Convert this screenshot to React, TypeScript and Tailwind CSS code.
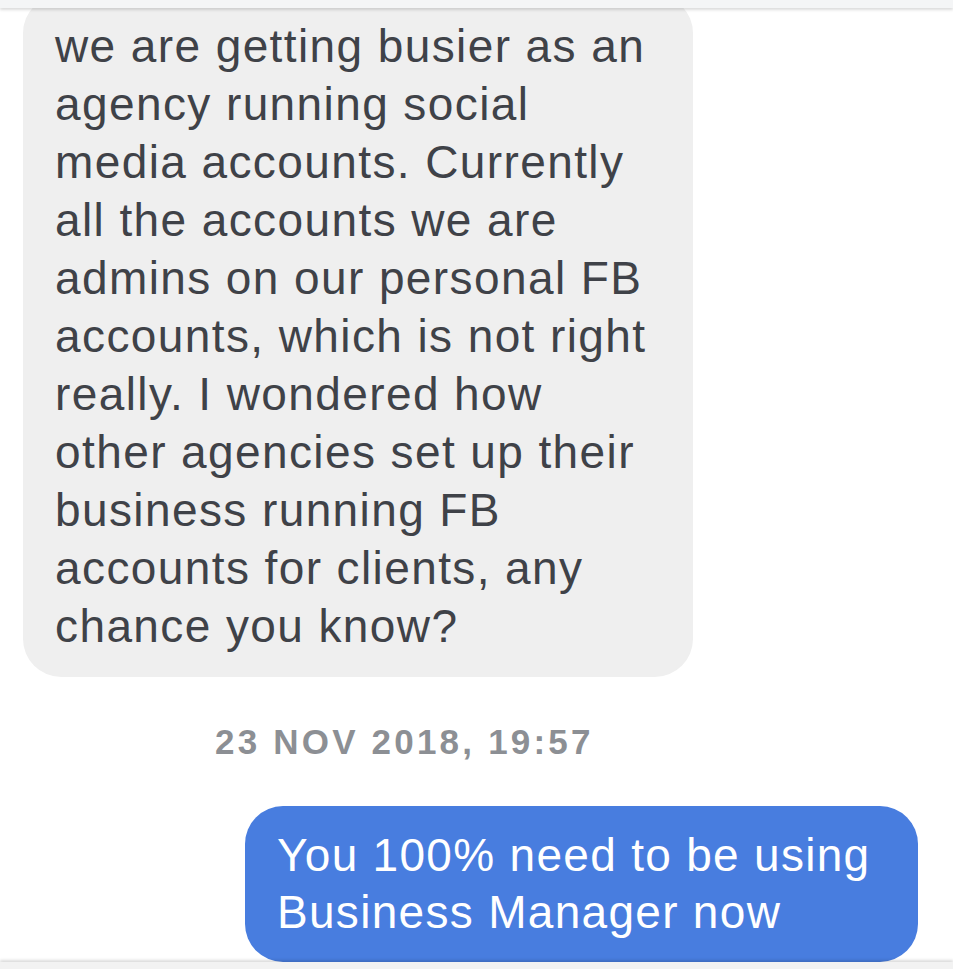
import React from 'react';

const incoming = [
  'we are getting busier as an',
  'agency running social',
  'media accounts. Currently',
  'all the accounts we are',
  'admins on our personal FB',
  'accounts, which is not right',
  'really. I wondered how',
  'other agencies set up their',
  'business running FB',
  'accounts for clients, any',
  'chance you know?',
];

const outgoing = ['You 100% need to be using', 'Business Manager now'];

export default function App() {
  return (
    <div className="relative h-[969px] w-[953px] overflow-hidden bg-white font-['Liberation_Sans',Arial,sans-serif]">
      {/* top edge of the window */}
      <div className="relative z-10 h-[8px] bg-[#f4f5f6] shadow-[0_2px_3px_rgba(0,0,0,0.14)]" />

      <div className="flex flex-col">
        {/* received bubble */}
        <div className="ml-[23px] mt-[-13px] w-[670px] rounded-[38px] bg-[#efefef] pt-[22px] pb-[22px] pl-[32px] pr-[28px] text-[46px] leading-[58px] tracking-[1.4px] text-[#3f4248]">
          {incoming.map((line, i) => (
            <div key={i}>{line}</div>
          ))}
        </div>

        {/* timestamp */}
        <div className="mt-[45px] pl-[215px] text-[35px] font-bold leading-[40px] tracking-[3.2px] text-[#8c8f94]">
          23 NOV 2018, 19:57
        </div>

        {/* sent bubble */}
        <div className="ml-[245px] mt-[44px] w-[673px] rounded-[38px] bg-[#487ddf] pt-[21px] pb-[21px] pl-[32px] pr-[28px] text-[46px] leading-[57px] tracking-[1.3px] text-white">
          {outgoing.map((line, i) => (
            <div key={i}>{line}</div>
          ))}
        </div>
      </div>

      {/* bottom edge of the window */}
      <div className="absolute bottom-0 left-0 right-0 z-10 h-[7px] bg-[#f2f2f2] shadow-[0_-2px_3px_rgba(0,0,0,0.14)]" />
    </div>
  );
}
